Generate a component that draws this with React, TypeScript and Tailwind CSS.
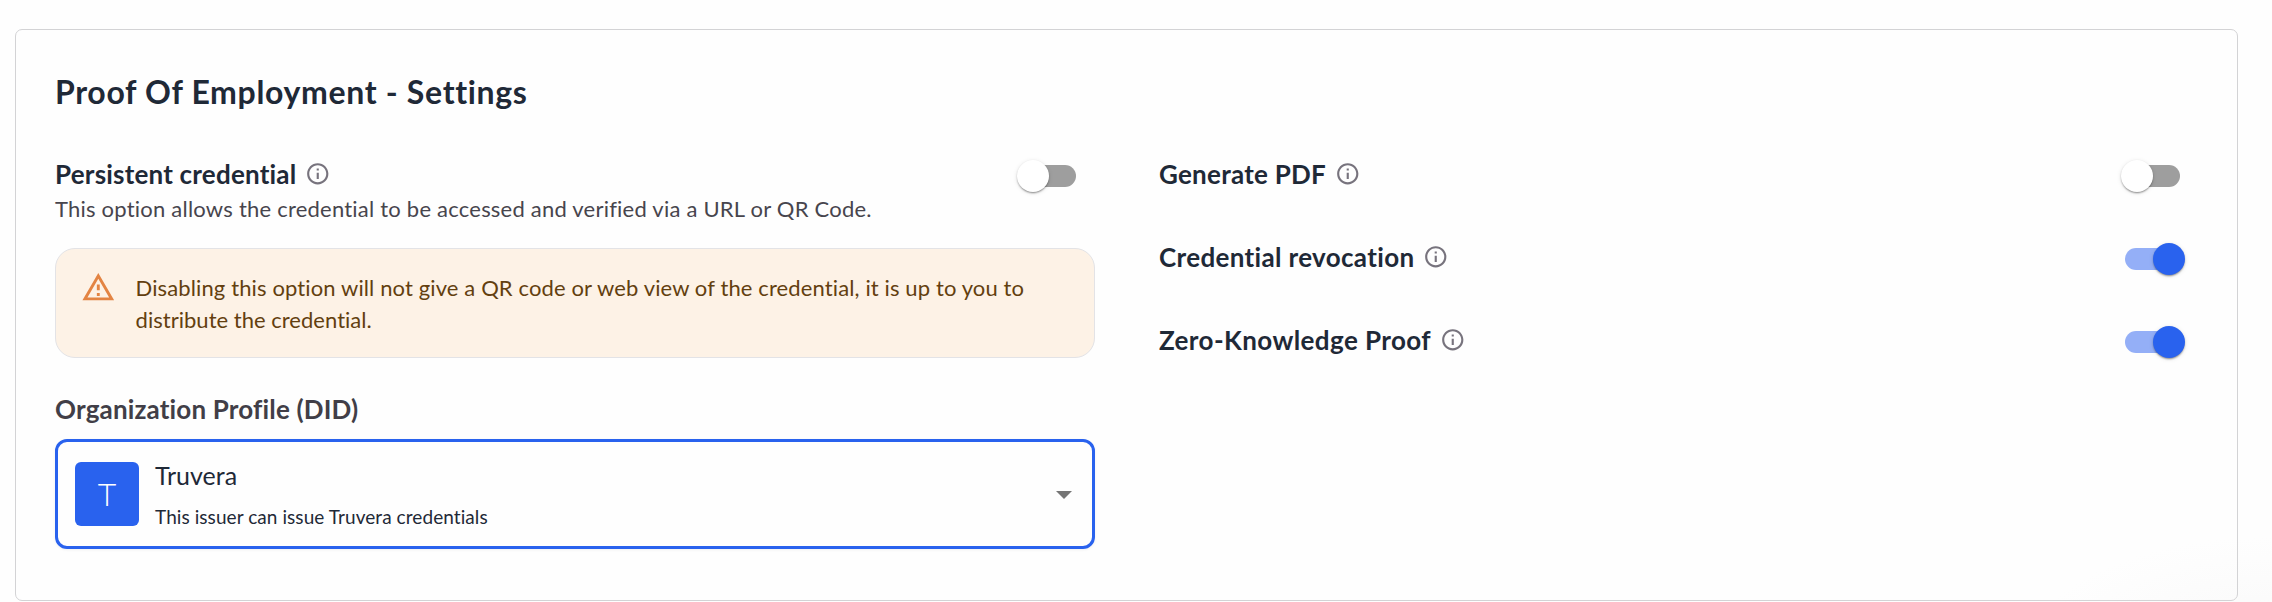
import React from "react";
import clsx from "clsx";

function InfoIcon() {
  return (
    <svg viewBox="0 0 24 24" className="mt-[3px] size-[25.5px] shrink-0 fill-[#77737d]" aria-hidden="true">
      <path d="M11 7h2v2h-2zm0 4h2v6h-2zm1-9C6.48 2 2 6.48 2 12s4.48 10 10 10 10-4.48 10-10S17.52 2 12 2m0 18c-4.41 0-8-3.59-8-8s3.59-8 8-8 8 3.59 8 8-3.59 8-8 8" />
    </svg>
  );
}

function WarningIcon() {
  return (
    <svg viewBox="0 0 24 24" className="mt-[21px] size-[34.6px] shrink-0 fill-[#e38443]" aria-hidden="true">
      <path d="M12 5.99 19.53 19H4.47zM12 2 1 21h22zm1 14h-2v2h2zm0-6h-2v4h2z" />
    </svg>
  );
}

function Toggle({ on }: { on: boolean }) {
  return (
    <span role="switch" aria-checked={on} className="relative flex h-9 w-[55px] shrink-0 items-center">
      <span className={clsx("h-[22.5px] w-full rounded-full", on ? "bg-[#94aff7]" : "bg-[#9e9e9e]")} />
      <span
        className={clsx(
          "absolute top-[1.5px] size-8 rounded-full shadow-[0_2px_2px_-1px_rgba(0,0,0,0.3),0_1px_2px_rgba(0,0,0,0.18),0_1px_5px_rgba(0,0,0,0.1)]",
          on ? "left-7 bg-[#2962ee]" : "-left-1 bg-white",
        )}
      />
    </span>
  );
}

function Setting({ label, on, tracking }: { label: string; on: boolean; tracking: string }) {
  return (
    <div className="flex h-9 items-start justify-between">
      <div className="flex items-start gap-[9px]">
        <span className={clsx("text-[26px] leading-8 font-bold whitespace-nowrap text-[#1f2937]", tracking)}>{label}</span>
        <InfoIcon />
      </div>
      <Toggle on={on} />
    </div>
  );
}

export default function App() {
  return (
    <div className="h-[602px] w-[2272px] overflow-hidden bg-white bg-[radial-gradient(ellipse_280px_140px_at_100%_110%,#f8f8f8,#fefefe_90%)] pt-[29px] pl-[15px] font-['Lato','Noto_Sans',sans-serif]">
      <section className="h-[572px] w-[2223px] rounded-[7px] border border-[#d3d3d5] pt-[42px] pl-[39px]">
        <h2 className="text-[32px] leading-10 font-bold tracking-[0.67px] text-[#1f2937]">Proof Of Employment - Settings</h2>
        <div className="mt-[46px] flex gap-[64px]">
          <div className="w-[1040px]">
            <div className="pr-[19px]">
              <Setting label="Persistent credential" on={false} tracking="tracking-[0.2px]" />
            </div>
            <p className="mt-px text-[22px] leading-7 tracking-[0.22px] text-[#47454d]">
              This option allows the credential to be accessed and verified via a URL or QR Code.
            </p>
            <div className="mt-[25px] flex h-[110px] gap-5 rounded-[20px] border border-[#e3e3e6] bg-[#fdf2e6] pl-[25px]">
              <WarningIcon />
              <p className="mt-[23px] text-[22px] leading-8 tracking-[0.12px] whitespace-nowrap text-[#633f0f]">
                Disabling this option will not give a QR code or web view of the credential, it is up to you to
                <br />
                <span className="tracking-[0.02px]">distribute the credential.</span>
              </p>
            </div>
            <h3 className="mt-[35px] text-[26px] leading-8 font-bold tracking-[0.16px] text-[#413e47]">Organization Profile (DID)</h3>
            <div className="mt-3.5 flex h-[110px] items-center rounded-xl border-3 border-[#2962ee] pr-5 pl-[17px] shadow-[0_1px_3px_rgba(0,0,0,0.06)]">
              <div className="flex size-16 items-center justify-center rounded-md bg-[#2962ee] text-[32px] font-light text-white">T</div>
              <div className="ml-4 flex-1 text-[#1f2937]">
                <div className="text-[25px] leading-8">Truvera</div>
                <div className="mt-3.5 text-[19px] leading-6 tracking-[0.07px]">This issuer can issue Truvera credentials</div>
              </div>
              <svg viewBox="0 0 16 8" className="mt-0.5 h-2 w-4 fill-[#757575]" aria-hidden="true">
                <path d="M0 0h16L8 8z" />
              </svg>
            </div>
          </div>
          <div className="flex w-[1021px] flex-col gap-[47px]">
            <Setting label="Generate PDF" on={false} tracking="tracking-[0.25px]" />
            <Setting label="Credential revocation" on tracking="tracking-[0.34px]" />
            <Setting label="Zero-Knowledge Proof" on tracking="tracking-[0.4px]" />
          </div>
        </div>
      </section>
    </div>
  );
}
